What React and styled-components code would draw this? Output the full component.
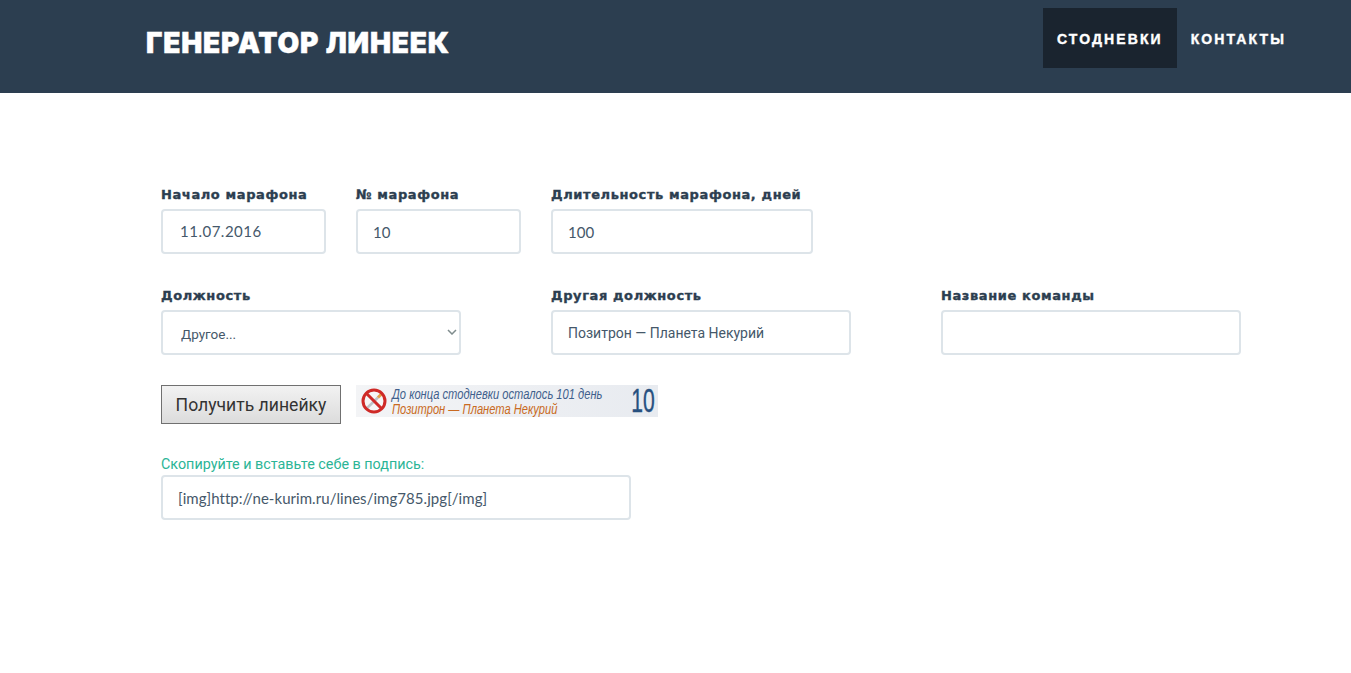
import React from 'react';
import styled, { createGlobalStyle } from 'styled-components';

const GlobalStyle = createGlobalStyle`
    html, body {
        margin: 0;
        background: #fff;
        font-family: Lato, "Open Sans", sans-serif;
        color: #34495e;
    }
`;

const Header = styled.header`
    display: flex;
    justify-content: space-between;
    height: 93px;
    padding: 8px 51px 0 146px;
    box-sizing: border-box;
    background: #2c3e50;
`;

const Logo = styled.a`
    margin-top: 18px;
    font-family: Inter, sans-serif;
    font-size: 28px;
    line-height: 34px;
    font-weight: 900;
    letter-spacing: 0.85px;
    -webkit-text-stroke: 0.5px #fff;
    color: #fff;
    text-transform: uppercase;
`;

const Nav = styled.nav`
    display: flex;
    align-items: flex-start;
`;

const NavLink = styled.a`
    display: block;
    height: 60px;
    padding: 0 14px;
    font-family: "Liberation Sans", sans-serif;
    font-size: 14px;
    font-weight: 700;
    line-height: 63px;
    letter-spacing: 2.1px;
    -webkit-text-stroke: 0.4px #fff;
    color: #fff;
    background: ${props => props.$active ? '#1a242f' : 'transparent'};
`;

const Main = styled.main`
    display: flex;
    flex-direction: column;
    padding: 92px 0 0 161px;
`;

const Row = styled.div`
    display: flex;
    gap: ${props => props.$gap}px;
    margin-bottom: ${props => props.$bottom}px;
`;

const Field = styled.div`
    display: flex;
    flex-direction: column;
    width: ${props => props.$width}px;
`;

const Label = styled.label`
    height: 24px;
    font-family: "DejaVu Sans", sans-serif;
    font-size: 13px;
    font-weight: 700;
    line-height: 19px;
    letter-spacing: 0.6px;
    -webkit-text-stroke: 0.35px #2c3e50;
    white-space: nowrap;
    color: #2c3e50;
`;

const Input = styled.input`
    box-sizing: border-box;
    width: 100%;
    height: 45px;
    padding: 0 15px;
    border: 2px solid #dde4e9;
    border-radius: 4px;
    outline: none;
    background: #fff;
    font-family: ${props => props.$cyrillic ? 'Roboto' : 'Lato'}, sans-serif;
    font-size: ${props => props.$cyrillic ? 14 : 15}px;
    letter-spacing: ${props => props.$spacing || 0}px;
    color: #45586a;
    padding-left: ${props => props.$inset || 15}px;
    padding-bottom: ${props => props.$lift || 0}px;
`;

const SelectBox = styled.div`
    position: relative;
    height: 45px;

    svg {
        position: absolute;
        top: 19px;
        right: 4px;
        pointer-events: none;
    }
`;

const Select = styled.select`
    box-sizing: border-box;
    width: 100%;
    height: 45px;
    padding: 2px 15px 0 18px;
    appearance: none;
    border: 2px solid #dde4e9;
    border-radius: 4px;
    outline: none;
    background: #fff;
    font-family: Roboto, sans-serif;
    font-size: 13.5px;
    color: #45586a;
`;

const ActionRow = styled.div`
    display: flex;
    align-items: flex-start;
    gap: 15px;
    margin-bottom: 31px;
`;

const Button = styled.button`
    box-sizing: border-box;
    width: 180px;
    height: 39px;
    padding: 0;
    border: 1px solid #707070;
    background: linear-gradient(#f2f2f2, #dcdcdc);
    font-family: Roboto, sans-serif;
    font-size: 17.6px;
    color: #333;
`;

const Banner = styled.div`
    display: flex;
    align-items: center;
    width: 302px;
    height: 32px;
    padding: 0 3px 0 5px;
    box-sizing: border-box;
    background: linear-gradient(90deg, #f3f4f6, #e8ebf0);

    svg {
        flex-shrink: 0;
    }
`;

const BannerText = styled.div`
    flex: 1;
    min-width: 0;
    margin-left: 5px;
    font-family: "Liberation Sans", sans-serif;
    font-size: 15px;
    font-style: italic;
    line-height: 15px;
    white-space: nowrap;
`;

const BannerLine = styled.div`
    color: ${props => props.$color};
    transform: scaleX(0.743);
    transform-origin: left center;
`;

const BannerNumber = styled.div`
    font-family: "Liberation Sans", sans-serif;
    font-size: 33px;
    line-height: 32px;
    -webkit-text-stroke: 0.4px #27507f;
    color: #27507f;
    transform: scaleX(0.64);
    transform-origin: right center;
`;

const Hint = styled.div`
    height: 20px;
    font-family: Roboto, sans-serif;
    font-size: 14.35px;
    line-height: 20px;
    color: #2bb596;
`;

const NoSmoking = () => (
    <svg width="26" height="26" viewBox="0 0 26 26">
        <circle cx="13" cy="13" r="11" fill="#f6f6f6" />
        <path d="M5 21 L17 9.5" stroke="#bfc3c7" strokeWidth="2.5" />
        <path d="M17 9.5 L21.5 5" stroke="#e2a04a" strokeWidth="3" />
        <circle cx="13" cy="13" r="11" fill="none" stroke="#cf2a27" strokeWidth="3" />
        <path d="M5.5 5.5 L20.5 20.5" stroke="#cf2a27" strokeWidth="3" />
    </svg>
);

const Chevron = () => (
    <svg width="10" height="6" viewBox="0 0 10 6" fill="none">
        <path d="M1 1 L5 5 L9 1" stroke="#7f8c8d" strokeWidth="1.5" />
    </svg>
);

const App = () => (
    <>
        <GlobalStyle />
        <Header>
            <Logo>Генератор линеек</Logo>
            <Nav>
                <NavLink $active>СТОДНЕВКИ</NavLink>
                <NavLink>КОНТАКТЫ</NavLink>
            </Nav>
        </Header>

        <Main>
            <Row $gap={30} $bottom={32}>
                <Field $width={165}>
                    <Label>Начало марафона</Label>
                    <Input $inset={17} $spacing={0.5} $lift={2} defaultValue="11.07.2016" />
                </Field>
                <Field $width={165}>
                    <Label>№ марафона</Label>
                    <Input defaultValue="10" />
                </Field>
                <Field $width={262}>
                    <Label>Длительность марафона, дней</Label>
                    <Input defaultValue="100" />
                </Field>
            </Row>

            <Row $gap={90} $bottom={30}>
                <Field $width={300}>
                    <Label>Должность</Label>
                    <SelectBox>
                        <Select defaultValue="other">
                            <option value="other">Другое...</option>
                        </Select>
                        <Chevron />
                    </SelectBox>
                </Field>
                <Field $width={300}>
                    <Label>Другая должность</Label>
                    <Input $cyrillic defaultValue="Позитрон — Планета Некурий" />
                </Field>
                <Field $width={300}>
                    <Label>Название команды</Label>
                    <Input />
                </Field>
            </Row>

            <ActionRow>
                <Button>Получить линейку</Button>
                <Banner>
                    <NoSmoking />
                    <BannerText>
                        <BannerLine $color="#3f5f8c">До конца стодневки осталось 101 день</BannerLine>
                        <BannerLine $color="#c96a22">Позитрон — Планета Некурий</BannerLine>
                    </BannerText>
                    <BannerNumber>10</BannerNumber>
                </Banner>
            </ActionRow>

            <Field $width={470}>
                <Hint>Скопируйте и вставьте себе в подпись:</Hint>
                <Input $spacing={0.05} defaultValue="[img]http://ne-kurim.ru/lines/img785.jpg[/img]" />
            </Field>
        </Main>
    </>
);

export default App;
